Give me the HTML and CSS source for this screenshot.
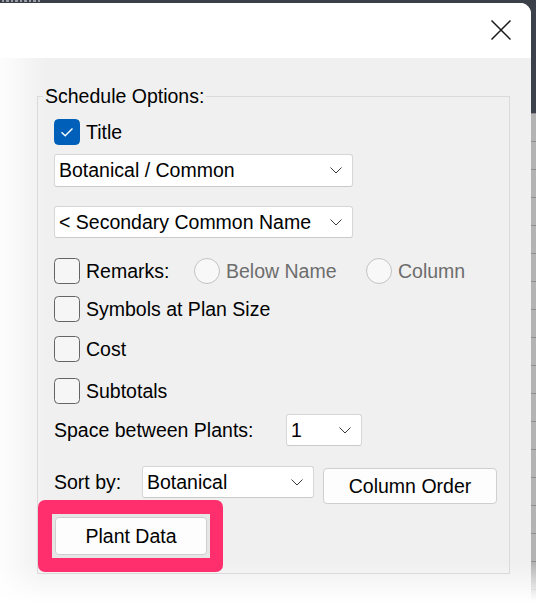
FILE: index.html
```html
<!DOCTYPE html>
<html>
<head>
<meta charset="utf-8">
<link rel="stylesheet" href="styles.css">
</head>
<body>
<div class="screen">
  <div class="top"><span class="frag"></span></div>
  <div class="main">
    <div class="dialog">
      <div class="titlebar">
        <svg class="close" width="20" height="20" viewBox="0 0 20 20"><path d="M0.5 0.5 L19.5 19.5 M19.5 0.5 L0.5 19.5" stroke="#1a1a1a" stroke-width="1.5" fill="none"/></svg>
      </div>
      <div class="content">
        <fieldset class="group">
          <legend>Schedule Options:</legend>

          <div class="checkrow r-title">
            <span class="cb checked"><svg width="26" height="26" viewBox="0 0 26 26"><path d="M7.5 13.2 L11.2 16.8 L18.5 9.5" stroke="#fff" stroke-width="1.4" fill="none"/></svg></span>
            <span class="lbl">Title</span>
          </div>

          <div class="select s-name s1"><span>Botanical / Common</span><svg class="chev" width="12" height="7" viewBox="0 0 12 7"><path d="M0.5 0.5 L6 6 L11.5 0.5" stroke="#3a3a3a" stroke-width="1" fill="none"/></svg></div>

          <div class="select s-name s2"><span>&lt; Secondary Common Name</span><svg class="chev" width="12" height="7" viewBox="0 0 12 7"><path d="M0.5 0.5 L6 6 L11.5 0.5" stroke="#3a3a3a" stroke-width="1" fill="none"/></svg></div>

          <div class="checkrow r-remarks">
            <span class="cb"></span>
            <span class="lbl remarks-lbl">Remarks:</span>
            <span class="opt opt-first"><span class="radio"></span><span class="dim">Below Name</span></span>
            <span class="opt"><span class="radio"></span><span class="dim">Column</span></span>
          </div>

          <div class="checkrow r-symbols">
            <span class="cb"></span>
            <span class="lbl">Symbols at Plan Size</span>
          </div>

          <div class="checkrow r-cost">
            <span class="cb"></span>
            <span class="lbl">Cost</span>
          </div>

          <div class="checkrow r-subtotals">
            <span class="cb"></span>
            <span class="lbl">Subtotals</span>
          </div>

          <div class="fieldrow r-space">
            <span class="flabel space-lbl">Space between Plants:</span>
            <div class="select s-space"><span>1</span><svg class="chev" width="12" height="7" viewBox="0 0 12 7"><path d="M0.5 0.5 L6 6 L11.5 0.5" stroke="#3a3a3a" stroke-width="1" fill="none"/></svg></div>
          </div>

          <div class="fieldrow r-sort">
            <span class="flabel sort-lbl">Sort by:</span>
            <div class="select s-sort"><span>Botanical</span><svg class="chev" width="12" height="7" viewBox="0 0 12 7"><path d="M0.5 0.5 L6 6 L11.5 0.5" stroke="#3a3a3a" stroke-width="1" fill="none"/></svg></div>
            <button class="btn btn-order">Column Order</button>
          </div>

          <div class="highlight">
            <div class="ring">
              <button class="btn btn-plant">Plant Data</button>
            </div>
          </div>
        </fieldset>
      </div>
    </div>
    <div class="edge"></div>
  </div>
</div>
</body>
</html>
```

FILE: styles.css
```css
html, body {
  margin: 0;
  padding: 0;
}
body {
  width: 536px;
  height: 610px;
  overflow: hidden;
  background: #3b3f48;
  font-family: "Liberation Sans", Arial, sans-serif;
  font-size: 19.5px;
  color: #000;
}
.screen {
  display: flex;
  flex-direction: column;
  height: 610px;
}
.top {
  height: 3px;
  flex: none;
  display: flex;
  align-items: flex-start;
}
.frag {
  display: block;
  width: 40px;
  height: 2px;
  margin-left: 2px;
  background: repeating-linear-gradient(to right, #aeb2b8 0 2px, rgba(0,0,0,0) 2px 4px, #aeb2b8 4px 7px, rgba(0,0,0,0) 7px 9px);
  opacity: 0.8;
}
.main {
  display: flex;
  flex: 1;
}
.dialog {
  width: 531px;
  flex: none;
  display: flex;
  flex-direction: column;
  background: #fff;
  border-top-right-radius: 11px;
  overflow: hidden;
}
.edge {
  flex: 1;
  background:
    linear-gradient(to bottom, rgba(255,255,255,0) 560px, #fff 598px),
    linear-gradient(to bottom, #3c414b 110px, rgba(0,0,0,0) 110px),
    repeating-linear-gradient(to bottom, #8e8e8e 0 1px, #b3b3b3 1px 28px);
  background-position: 0 0, 0 0, 0 110px;
}
.titlebar {
  height: 55px;
  flex: none;
  display: flex;
  justify-content: flex-end;
  align-items: flex-start;
  padding-top: 17px;
  padding-right: 20px;
  box-sizing: border-box;
  background: #fff;
}
.close {
  display: block;
}
.content {
  flex: 1;
  padding: 27px 21px 0 37px;
  background:
    linear-gradient(to bottom, rgba(255,255,255,0) 506px, #fff 545px),
    linear-gradient(to right, #fdfdfd 0, #f0f0f0 45px);
}
.group {
  margin: 0;
  border: 1px solid #dadada;
  padding: 12px 16px 1px 16px;
  min-inline-size: 0;
}
.group legend {
  padding: 0 2px;
  margin-left: -11px;
  line-height: 22px;
}
.checkrow {
  display: flex;
  align-items: center;
  height: 26px;
}
.checkrow > * {
  flex: none;
}
.cb {
  width: 26px;
  height: 26px;
  box-sizing: border-box;
  border: 1px solid #646464;
  border-radius: 4.5px;
  background: #f6f6f6;
  margin-right: 6px;
}
.cb.checked {
  background: #005fb8;
  border-color: #005fb8;
}
.cb svg {
  display: block;
  margin: -1px;
}
.lbl {
  line-height: 26px;
}
.remarks-lbl {
  width: 108px;
}
.opt {
  display: flex;
  align-items: center;
}
.opt-first {
  width: 172px;
}
.radio {
  width: 26px;
  height: 26px;
  box-sizing: border-box;
  border: 1px solid #c3c3c3;
  border-radius: 50%;
  background: #f8f8f8;
  margin-right: 6px;
  flex: none;
}
.dim {
  color: #6d6d6d;
}
.select {
  display: flex;
  align-items: center;
  justify-content: space-between;
  box-sizing: border-box;
  background: #fff;
  border: 1px solid #d6d6d6;
  border-bottom-color: #cacaca;
  border-radius: 3px;
  padding: 0 10px 0 4px;
}
.chev {
  display: block;
  flex: none;
}
.s-name {
  width: 299px;
}
.s1 {
  height: 33px;
  margin-top: 9px;
}
.s2 {
  height: 32px;
  margin-top: 19px;
}
.r-remarks {
  margin-top: 20px;
}
.r-symbols {
  margin-top: 12px;
}
.r-cost {
  margin-top: 14px;
}
.r-subtotals {
  margin-top: 16px;
}
.fieldrow {
  display: flex;
  align-items: flex-start;
}
.fieldrow > * {
  flex: none;
}
.flabel {
  line-height: 32px;
}
.r-space {
  margin-top: 10px;
  height: 32px;
}
.space-lbl {
  width: 232px;
}
.s-space {
  width: 76px;
  height: 32px;
}
.r-sort {
  margin-top: 20px;
  height: 34px;
}
.sort-lbl {
  width: 88px;
}
.s-sort {
  width: 172px;
  height: 32px;
}
.btn {
  font-family: inherit;
  font-size: inherit;
  color: #000;
  background: #fdfdfd;
  border: 1px solid #cfcfcf;
  border-radius: 4px;
  padding: 0;
  box-sizing: border-box;
}
.btn-order {
  width: 174px;
  height: 36px;
  margin-left: 9px;
  margin-top: 2px;
}
.highlight {
  margin-left: -16px;
  width: 185px;
  height: 72px;
  box-sizing: border-box;
  padding: 14px 13px 14px 14px;
  background: #ff2f6d;
  border-radius: 7px;
}
.ring {
  height: 44px;
  box-sizing: border-box;
  padding: 3px;
  background: #e6e6e6;
}
.btn-plant {
  display: block;
  width: 152px;
  height: 38px;
}
```
